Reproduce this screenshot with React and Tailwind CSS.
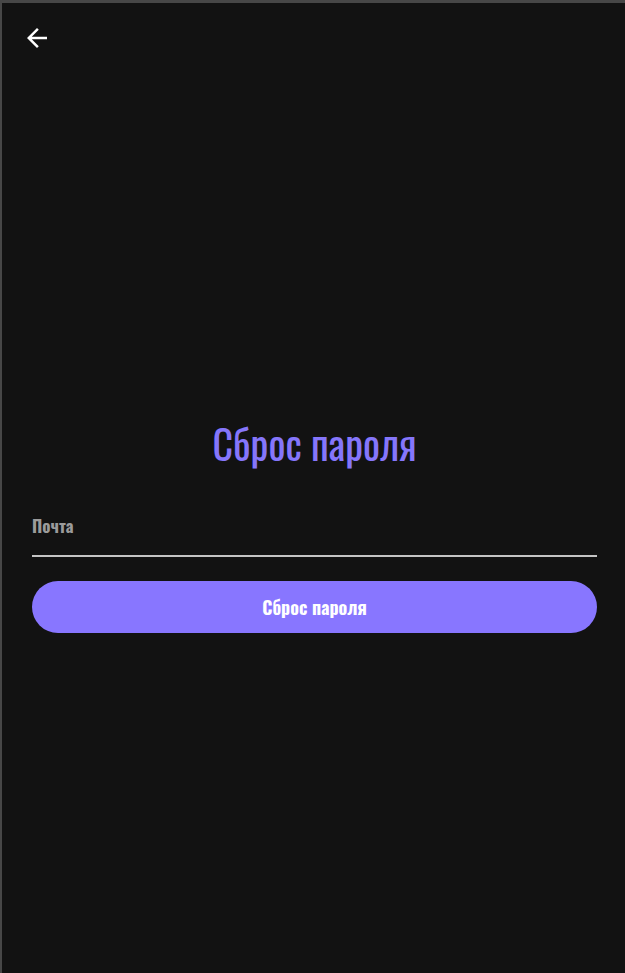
export default function App() {
  const font = { fontFamily: '"Oswald", "Liberation Sans Narrow", "DejaVu Sans Condensed", "Liberation Sans", sans-serif' };
  return (
    <div className="h-[973px] bg-[#121212] border-t-[3px] border-l-[2px] border-[#474747] flex flex-col" style={font}>
      <div className="pl-[20px] pt-[20px]">
        <button className="w-[30px] h-[30px] flex items-center justify-center text-white">
          <svg viewBox="0 0 24 24" width="30" height="30" fill="currentColor">
            <path d="M20 11H7.83l5.59-5.59L12 4l-8 8 8 8 1.41-1.41L7.83 13H20v-2z" />
          </svg>
        </button>
      </div>
      <div className="pl-[30px] pr-[28px] pt-[366px]">
        <h1 className="text-center text-[#8576fb] text-[40px] leading-[48px]">Сброс пароля</h1>
        <div className="mt-[48px]">
          <label className="block text-[#9b9b9b] text-[17px] leading-[22px] font-bold">Почта</label>
          <div className="mt-[18px] h-[2px] bg-[#c4c4c4]" />
        </div>
        <button className="mt-[24px] w-full h-[52px] rounded-full bg-[#8876ff] text-white text-[18px] font-bold">
          Сброс пароля
        </button>
      </div>
    </div>
  );
}
